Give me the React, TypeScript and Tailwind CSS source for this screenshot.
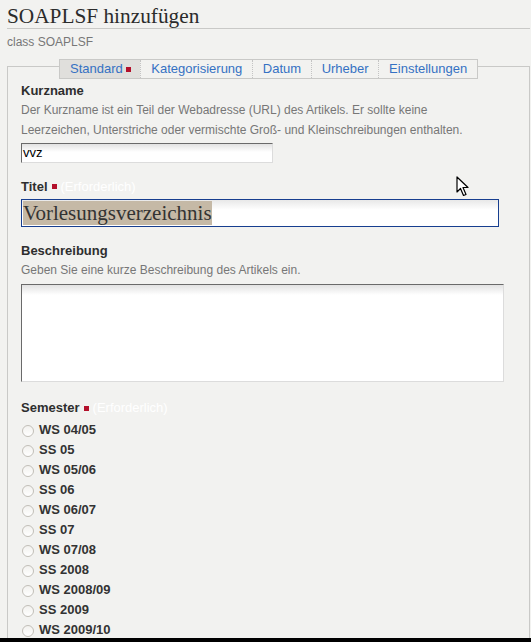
const tabs = ["Standard", "Kategorisierung", "Datum", "Urheber", "Einstellungen"];

const semesters = [
  "WS 04/05",
  "SS 05",
  "WS 05/06",
  "SS 06",
  "WS 06/07",
  "SS 07",
  "WS 07/08",
  "SS 2008",
  "WS 2008/09",
  "SS 2009",
  "WS 2009/10",
];

function Required() {
  return (
    <>
      <span className="ml-[4px] inline-block h-[5px] w-[5px] bg-[#b3102b]" />
      <span className="ml-[4px] font-normal text-white">(Erforderlich)</span>
    </>
  );
}

function Cursor() {
  return (
    <svg
      className="pointer-events-none absolute left-[456px] top-[176px]"
      width="14"
      height="21"
      viewBox="0 0 14 21"
    >
      <path
        d="M1 1 L1 16 L4.5 12.5 L7.5 19.5 L10 18.5 L7 11.5 L12 11.5 Z"
        fill="#fff"
        stroke="#000"
        strokeWidth="1.2"
        strokeLinejoin="round"
      />
    </svg>
  );
}

export default function App() {
  return (
    <div className="relative flex h-[642px] w-full flex-col overflow-hidden bg-[#f2f2f0] font-['Liberation_Sans',Arial,sans-serif] text-[#2e2e2e]">
      <div className="min-h-0 flex-1 overflow-hidden pl-[7px] pr-[1px]">
        <h1 className="border-b border-[#c9c9c7] pt-[5px] font-['Liberation_Serif','Times_New_Roman',serif] text-[21.3px] leading-[23px] text-[#2b2b2b]">
          SOAPLSF hinzufügen
        </h1>
        <div className="mt-[5px] text-[12px] leading-[16px] text-[#777]">class SOAPLSF</div>

        <div className="mt-[16px] h-[700px] border border-[#c9c9c7] pl-[13px] pr-[13px]">
          <div className="-mt-[8px] ml-[38px] flex w-fit border border-[#c9c9c7] bg-[#f2f2f0] text-[13px] leading-[18px] text-[#3571c3]">
            {tabs.map((t, i) => (
              <div
                key={t}
                className={
                  i === 0
                    ? "flex items-center bg-[#e0dfdc] pl-[10px] pr-[9.5px]"
                    : "flex items-center border-l border-dotted border-[#c4c4c4] pl-[10px] pr-[9.5px]"
                }
              >
                {t}
                {i === 0 && <span className="ml-[3px] inline-block h-[5px] w-[5px] bg-[#b3102b]" />}
              </div>
            ))}
          </div>

          <div className="mt-[3.5px] text-[13px] font-bold leading-[16px]">Kurzname</div>
          <div className="mt-[1px] w-[465px] text-[12px] leading-[20px] text-[#777]">
            Der Kurzname ist ein Teil der Webadresse (URL) des Artikels. Er sollte keine Leerzeichen, Unterstriche
            oder vermischte Groß- und Kleinschreibungen enthalten.
          </div>
          <div className="mt-[3px] h-[20px] w-[252px] border border-t-[#6a6a6a] border-l-[#6a6a6a] border-r-[#dcdcdc] border-b-[#dcdcdc] bg-[linear-gradient(180deg,#e2e2e2_0px,#ffffff_8px)] pl-[1px] text-[13px] leading-[18px] text-black">
            vvz
          </div>

          <div className="mt-[16px] flex items-center text-[13px] font-bold leading-[16px]">
            Titel
            <Required />
          </div>
          <div className="mt-[4.5px] h-[28px] w-[478px] border border-[#173e8f] bg-[linear-gradient(180deg,#e8e8e8_0px,#ffffff_10px)] p-[1px]">
            <span className="inline-block bg-[#c5b9a6] font-['Liberation_Serif','Times_New_Roman',serif] text-[21px] leading-[24px] text-[#333]">
              Vorlesungsverzeichnis
            </span>
          </div>

          <div className="mt-[16px] text-[13px] font-bold leading-[16px]">Beschreibung</div>
          <div className="mt-[1px] text-[12px] leading-[20px] text-[#777]">
            Geben Sie eine kurze Beschreibung des Artikels ein.
          </div>
          <div className="mt-[3.5px] h-[98px] w-[483px] border border-t-[#6a6a6a] border-l-[#6a6a6a] border-r-[#dcdcdc] border-b-[#dcdcdc] bg-[linear-gradient(180deg,#e2e2e2_0px,#ffffff_10px)]" />

          <div className="mt-[18.5px] flex items-center text-[13px] font-bold leading-[16px]">
            Semester
            <Required />
          </div>
          <div className="mt-[4px] flex flex-col">
            {semesters.map((s) => (
              <div key={s} className="flex h-[20px] items-center text-[13px] font-bold leading-[20px] text-[#333]">
                <span className="ml-[1px] mt-[2px] inline-block h-[12px] w-[12px] rounded-full border border-[#c2bfb8] bg-[linear-gradient(180deg,#f2f1ee,#ffffff)]" />
                <span className="ml-[5px]">{s}</span>
              </div>
            ))}
          </div>
        </div>
      </div>
      <div className="h-[4px] shrink-0 bg-black" />
      <Cursor />
    </div>
  );
}
